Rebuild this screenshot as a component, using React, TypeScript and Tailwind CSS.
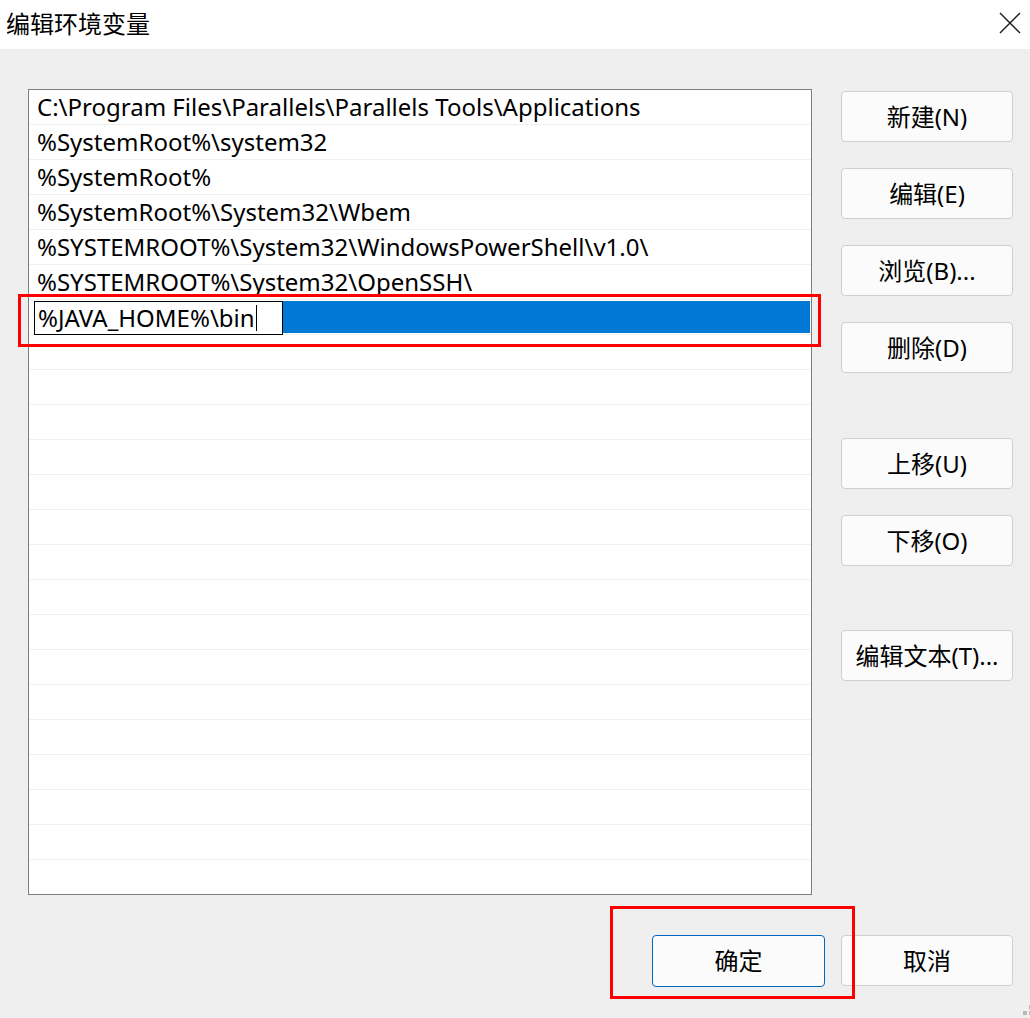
import React from "react";

const rows = [
  "C:\\Program Files\\Parallels\\Parallels Tools\\Applications",
  "%SystemRoot%\\system32",
  "%SystemRoot%",
  "%SystemRoot%\\System32\\Wbem",
  "%SYSTEMROOT%\\System32\\WindowsPowerShell\\v1.0\\",
  "%SYSTEMROOT%\\System32\\OpenSSH\\",
];

const FONT = { fontFamily: '"Noto Sans", "Noto Sans CJK SC", sans-serif' };

function Btn({ label, primary }: { label: string; primary?: boolean }) {
  return (
    <div
      className={
        "w-[172px] h-[51px] flex items-center justify-center rounded-[4px] bg-[#fbfbfb] border text-[24px] text-black " +
        (primary ? "border-[#0067c0]" : "border-[#cfcfcf]")
      }
    >
      {label}
    </div>
  );
}

export default function App() {
  const empty = Array.from({ length: 16 });
  return (
    <div className="relative w-[1030px] h-[1018px] bg-[#efefef] flex flex-col overflow-hidden" style={FONT}>
      {/* Title bar */}
      <div className="h-[49px] bg-white flex items-center justify-between shrink-0">
        <div className="pl-[6px] text-[24px] text-black leading-none pb-[2px]">编辑环境变量</div>
        <svg width="22" height="22" viewBox="0 0 22 22" className="mr-[9px] mb-[3px]">
          <path d="M1 1 L21 21 M21 1 L1 21" stroke="#1a1a1a" strokeWidth="1.4" fill="none" />
        </svg>
      </div>

      {/* Body */}
      <div className="flex-1 flex flex-col pl-[28px] pr-[17px]">
        <div className="flex mt-[40px]">
          {/* List */}
          <div className="relative w-[784px] h-[806px] border border-[#7a7e83] bg-white text-[24px] text-black overflow-hidden">
            {rows.map((r, i) => (
              <div key={i} className="h-[35px] border-b border-[#efefef] flex items-center pl-[8px] whitespace-nowrap">
                {r}
              </div>
            ))}
            <div className="h-[35px] border-b border-[#efefef] flex items-stretch pl-[5px] pr-[1px] pt-[1px]">
              <div className="w-[249px] bg-white border border-black flex items-center pl-[3px] whitespace-nowrap -mb-[1px]">
                <span>%JAVA_HOME%\bin</span>
                <span className="inline-block w-[1px] h-[26px] bg-black ml-[1px]" />
              </div>
              <div className="flex-1 bg-[#0078d4] mb-[1px]" />
            </div>
            {empty.map((_, i) => (
              <div key={"e" + i} className="h-[35px] border-b border-[#efefef]" />
            ))}
          </div>
          <div className="absolute left-[18px] top-[294px] w-[803px] h-[53px] border-[3px] border-[#ff0000] pointer-events-none" />

          {/* Right buttons */}
          <div className="ml-[29px] mt-[2px] flex flex-col">
            <div className="flex flex-col gap-[26px]">
              <Btn label="新建(N)" />
              <Btn label="编辑(E)" />
              <Btn label="浏览(B)..." />
              <Btn label="删除(D)" />
            </div>
            <div className="mt-[65px] flex flex-col gap-[26px]">
              <Btn label="上移(U)" />
              <Btn label="下移(O)" />
            </div>
            <div className="mt-[64px]">
              <Btn label="编辑文本(T)..." />
            </div>
          </div>
        </div>

        {/* Bottom buttons */}
        <div className="mt-[40px] flex justify-end gap-[16px] relative">
          <div className="relative">
            <div className="w-[173px] h-[52px] flex items-center justify-center rounded-[4px] bg-[#fbfbfb] border border-[#0067c0] text-[24px] text-black">
              确定
            </div>
            <div className="absolute -left-[42px] -top-[29px] w-[245px] h-[93px] border-[3px] border-[#ff0000] pointer-events-none" />
          </div>
          <Btn label="取消" />
        </div>
      </div>

      {/* Resize grip */}
      <div className="absolute left-[1023px] top-[1011px] w-[4px] h-[4px] bg-[#b8b8b8]" />
      <div className="absolute left-[1029px] top-[1011px] w-[4px] h-[4px] bg-[#b8b8b8]" />
      <div className="absolute left-[1029px] top-[1005px] w-[4px] h-[4px] bg-[#b8b8b8]" />
    </div>
  );
}
